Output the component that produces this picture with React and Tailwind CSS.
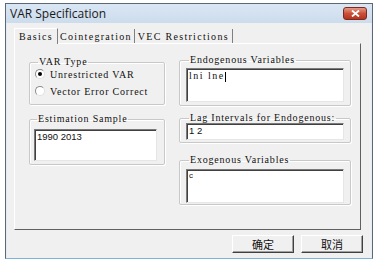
import React from 'react';

const serif = "font-['Liberation_Serif','DejaVu_Serif',serif]";
const mono = `${serif} tracking-[0.8px]`;
const sunken = "border border-t-[#7a7a7a] border-l-[#7a7a7a] border-b-[#e6e6e6] border-r-[#e6e6e6] shadow-[inset_1px_1px_0_#404040] bg-white";

function Group({ label, className, children }) {
    return (
        <fieldset className={`border border-[#c8c8c8] rounded-[2px] shadow-[inset_1px_1px_0_#fff,1px_1px_0_#fff] ${className}`}>
            <legend className={`${mono} text-[10px] leading-[10px] text-[#111] ml-[3px] px-[1px] whitespace-nowrap`}>{label}</legend>
            {children}
        </fieldset>
    );
}

function Radio({ checked, label }) {
    return (
        <div className="flex items-center gap-[5px] h-[12px]">
            <span className="w-[10px] h-[10px] rounded-full border border-t-[#8a8a8a] border-l-[#8a8a8a] border-b-[#e0e0e0] border-r-[#e0e0e0] bg-white flex items-center justify-center shrink-0">
                {checked && <span className="w-[4px] h-[4px] rounded-full bg-black" />}
            </span>
            <span className={`${mono} text-[10px] text-[#111] whitespace-nowrap`}>{label}</span>
        </div>
    );
}

function Button({ children }) {
    return (
        <button className="w-[62px] h-[18px] bg-[#f0f0f0] border border-t-white border-l-white border-b-[#404040] border-r-[#404040] shadow-[inset_-1px_-1px_0_#a0a0a0] text-[11px] leading-none text-[#111] font-['Noto_Sans_CJK_SC',sans-serif]">
            {children}
        </button>
    );
}

export default function App() {
    return (
        <div className="w-[380px] h-[265px] bg-white pt-[3px] pl-[5px]">
            <div className="w-[368px] h-[256px] border border-[#5a6878] flex flex-col bg-[#f0f0f0] border-b-[#7fb4d9]">
                {/* Title bar */}
                <div className="h-[19px] flex items-center justify-between pl-[4px] pr-[5px] bg-gradient-to-b from-[#d9e6f4] to-[#cddcec]">
                    <span className="text-[12px] text-[#1a1a1a] font-['Open_Sans','Noto_Sans',sans-serif] leading-none">VAR Specification</span>
                    <div className="w-[24px] h-[13px] rounded-[3px] border border-[#7a2a20] bg-gradient-to-b from-[#e59a88] via-[#c9503a] to-[#b5341e] flex items-center justify-center">
                        <svg width="9" height="7" viewBox="0 0 9 7">
                            <path d="M1 0.5 L8 6.5 M8 0.5 L1 6.5" stroke="#fff" strokeWidth="1.8" />
                        </svg>
                    </div>
                </div>
                {/* Body */}
                <div className="flex-1 flex flex-col px-[7px] pt-[5px] border-l border-r border-[#e4ecf4]">
                    {/* Tabs */}
                    <div className={`${serif} tracking-[1.3px] text-[10px] text-[#111] flex items-end h-[15px]`}>
                        <div className="h-[16px] px-[4px] border border-b-0 border-t-white border-l-white border-r-[#808080] bg-[#f0f0f0] flex items-center relative z-10 -mb-[1px]">Basics</div>
                        <div className="h-[14px] px-[2px] flex items-center border-r border-[#808080]">Cointegration</div>
                        <div className="h-[14px] px-[3px] flex items-center border-r border-[#808080]">VEC Restrictions</div>
                    </div>
                    {/* Panel */}
                    <div className="w-[347px] h-[187px] border border-t-white border-l-white border-b-[#606060] border-r-[#606060] flex gap-[14px] pl-[14px] pt-[13px]">
                        <div className="w-[136px] flex flex-col gap-[9px]">
                            <Group label="VAR Type" className="h-[48px] pl-[5px] pt-[1px] flex flex-col gap-[5px] overflow-hidden">
                                <Radio checked label="Unrestricted VAR" />
                                <Radio label="Vector Error Correct" />
                            </Group>
                            <Group label="Estimation Sample" className="h-[51px] pl-[4px] pr-[7px] pt-[5px]">
                                <div className={`${sunken} h-[32px] px-[2px] text-[9.5px] font-['Liberation_Sans',sans-serif] text-[#111] leading-[13px]`}>1990 2013</div>
                            </Group>
                        </div>
                        <div className="w-[172px] flex flex-col -mt-[2px]">
                            <Group label="Endogenous Variables" className="h-[51px] px-[6px] pt-[3px]">
                                <div className={`${sunken} h-[34px] px-[2px] ${serif} tracking-[1.5px] text-[10px] text-[#111] leading-[13px]`}>lni lne<span className="inline-block w-px h-[10px] bg-black align-middle" /></div>
                            </Group>
                            <Group label="Lag Intervals for Endogenous:" className="mt-[7px] h-[30px] px-[6px] pt-0">
                                <div className={`${sunken} h-[17px] px-[2px] text-[9.5px] font-['Liberation_Sans',sans-serif] text-[#111] leading-[14px]`}>1 2</div>
                            </Group>
                            <Group label="Exogenous Variables" className="mt-[12px] h-[50px] px-[6px] pt-[4px]">
                                <div className={`${sunken} h-[34px] px-[2px] text-[8px] font-['Liberation_Sans',sans-serif] text-[#111] leading-[11px]`}>c</div>
                            </Group>
                        </div>
                    </div>
                    {/* Buttons */}
                    <div className="flex justify-end gap-[7px] mt-[5px] pr-[1px]">
                        <Button>确定</Button>
                        <Button>取消</Button>
                    </div>
                </div>
            </div>
        </div>
    );
}
